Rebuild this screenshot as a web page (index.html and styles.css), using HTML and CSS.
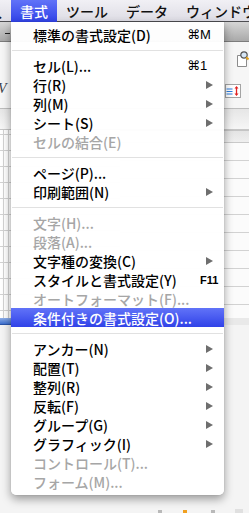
FILE: index.html
```html
<!DOCTYPE html>
<html lang="ja">
<head>
    <meta charset="UTF-8">
    <meta name="viewport" content="width=device-width, initial-scale=1.0">
    <title>書式メニュー</title>
    <link rel="stylesheet" href="styles.css">
</head>
<body>
    <!-- メニューバー -->
    <div class="menubar">
        <span class="mb-item mb-cut">入</span>
        <span class="mb-item mb-active">書式</span>
        <span class="mb-item">ツール</span>
        <span class="mb-item">データ</span>
        <span class="mb-item">ウィンドウ</span>
    </div>

    <!-- 背景のウィンドウ -->
    <div class="window">
        <div class="titlebar"><span class="tb-mark"></span></div>
        <div class="toolbar">
            <div class="tool-left"><span class="fmt-v">V</span></div>
            <div class="tool-right">
                <svg class="ico-find" width="13" height="16" viewBox="0 0 13 16">
                    <path d="M1.5 4.5h6l3 3v8h-9z" fill="#fff" stroke="#8c8c8c"/>
                    <circle cx="8" cy="4" r="3.2" fill="#d6e6f6" stroke="#555" stroke-width="1.2"/>
                    <path d="M10.3 6.3l2.2 2.2" stroke="#e3a21c" stroke-width="2"/>
                </svg>
                <svg class="ico-wrap" width="16" height="14" viewBox="0 0 16 14">
                    <rect x="0.5" y="0.5" width="15" height="13" fill="#fff" stroke="#a4a4a4"/>
                    <path d="M1.5 5h6M1.5 7.5h6M1.5 10h6" stroke="#2a7de0" stroke-width="1.2"/>
                    <path d="M11.5 3.5v7" stroke="#e02323" stroke-width="1.3"/>
                    <path d="M9.5 4.5l2-2.6 2 2.6zM9.5 9.5l2 2.6 2-2.6z" fill="#e02323"/>
                </svg>
            </div>
        </div>
        <div class="formula"></div>
        <div class="sheet">
            <div class="pane-left"></div>
            <div class="pane-right">
                <div class="colhead"></div>
                <div class="rows"></div>
            </div>
        </div>
        <div class="tabs"><span class="tab"></span></div>
        <div class="status">
            <span class="st st-gray"></span>
            <span class="st st-orange"></span>
            <span class="st st-gray"></span>
            <span class="st st-box"></span>
        </div>
    </div>

    <!-- 書式メニュー -->
    <div class="menu">
        <div class="item"><span class="label">標準の書式設定(D)</span><span class="mod">⌘</span><span class="ch">M</span></div>
        <div class="sep"></div>
        <div class="item"><span class="label">セル(L)...</span><span class="mod">⌘</span><span class="ch">1</span></div>
        <div class="item"><span class="label">行(R)</span><span class="arrow"></span></div>
        <div class="item"><span class="label">列(M)</span><span class="arrow"></span></div>
        <div class="item"><span class="label">シート(S)</span><span class="arrow"></span></div>
        <div class="item disabled"><span class="label">セルの結合(E)</span></div>
        <div class="sep"></div>
        <div class="item"><span class="label">ページ(P)...</span></div>
        <div class="item"><span class="label">印刷範囲(N)</span><span class="arrow"></span></div>
        <div class="sep"></div>
        <div class="item disabled"><span class="label">文字(H)...</span></div>
        <div class="item disabled"><span class="label">段落(A)...</span></div>
        <div class="item"><span class="label">文字種の変換(C)</span><span class="arrow"></span></div>
        <div class="item"><span class="label">スタイルと書式設定(Y)</span><span class="fkey">F11</span></div>
        <div class="item disabled"><span class="label">オートフォーマット(F)...</span></div>
        <div class="item selected"><span class="label">条件付きの書式設定(O)...</span></div>
        <div class="sep"></div>
        <div class="item"><span class="label">アンカー(N)</span><span class="arrow"></span></div>
        <div class="item"><span class="label">配置(T)</span><span class="arrow"></span></div>
        <div class="item"><span class="label">整列(R)</span><span class="arrow"></span></div>
        <div class="item"><span class="label">反転(F)</span><span class="arrow"></span></div>
        <div class="item"><span class="label">グループ(G)</span><span class="arrow"></span></div>
        <div class="item"><span class="label">グラフィック(I)</span><span class="arrow"></span></div>
        <div class="item disabled"><span class="label">コントロール(T)...</span></div>
        <div class="item disabled"><span class="label">フォーム(M)...</span></div>
    </div>
</body>
</html>
```

FILE: styles.css
```css
:root {
    --hilite-top: #6173f8;
    --hilite-bottom: #3042e8;
    --grid-line: #d2d2d2;
}
* {
    margin: 0;
    padding: 0;
    box-sizing: border-box;
}
body {
    position: relative;
    width: 249px;
    height: 513px;
    overflow: hidden;
    background: #fff;
    font-family: "Noto Sans CJK JP", "Liberation Sans", sans-serif;
    color: #000;
}

/* メニューバー */
.menubar {
    display: flex;
    height: 22px;
    background: linear-gradient(#f1f0f5, #dddce4);
    box-shadow: inset 0 -1px 0 #4e4e52;
    font-size: 14px;
    font-weight: 500;
    white-space: nowrap;
}
.mb-item {
    display: flex;
    align-items: center;
    height: 100%;
    padding: 0 9px 1px;
    color: #111;
}
.mb-cut {
    margin-left: -21px;
}
.mb-active {
    background: linear-gradient(var(--hilite-top), var(--hilite-bottom));
    color: #fff;
}

/* 背景ウィンドウ */
.window {
    display: flex;
    flex-direction: column;
    height: 491px;
}
.titlebar {
    height: 20px;
    padding: 11px 0 0 5px;
    background: linear-gradient(#d6d6d6, #a9a9a9);
    border-bottom: 1px solid #7c7c7c;
}
.tb-mark {
    display: block;
    width: 5px;
    height: 1px;
    background: #222;
}
.toolbar {
    display: flex;
    justify-content: space-between;
    height: 66px;
    background: #f6f6f6;
}
.tool-left {
    padding-top: 32px;
}
.fmt-v {
    font-family: "Liberation Serif", serif;
    font-style: italic;
    font-size: 14px;
    color: #3a3f4a;
    margin-left: -2px;
}
.tool-right {
    display: flex;
    flex-direction: column;
    width: 25px;
    padding-top: 9px;
}
.ico-find {
    margin-left: 12px;
}
.ico-wrap {
    margin-top: 17px;
    margin-left: 1px;
}
.formula {
    height: 22px;
    border-top: 1px solid #bdbdbd;
    border-bottom: 1px solid #c6c6c6;
    background: linear-gradient(#e6e6e6, #f6f6f6);
}
.sheet {
    display: flex;
    flex: 1;
}
.pane-left {
    width: 120px;
    background-color: #fff;
    background-image:
        linear-gradient(90deg, transparent 3px, var(--grid-line) 3px, var(--grid-line) 4px, transparent 4px, transparent 8px, var(--grid-line) 8px, var(--grid-line) 9px, transparent 9px),
        repeating-linear-gradient(transparent 0, transparent 15px, var(--grid-line) 15px, var(--grid-line) 16px);
    background-size: 100% 100%, 100% 16px;
    background-repeat: no-repeat, repeat-y;
    background-position: 0 0, 0 5px;
}
.pane-right {
    display: flex;
    flex-direction: column;
    flex: 1;
}
.colhead {
    height: 13px;
    background: linear-gradient(#e4e4e4, #efefef);
    border-top: 1px solid #c4c4c4;
    border-bottom: 1px solid #c9c9c9;
}
.rows {
    flex: 1;
    background: repeating-linear-gradient(#fbfbfb 0, #fbfbfb 17px, var(--grid-line) 17px, var(--grid-line) 18px);
}
.tabs {
    height: 7px;
    background: #e9e9e9;
}
.tab {
    display: block;
    width: 108px;
    height: 7px;
    border-radius: 0 0 4px 0;
    background: linear-gradient(#8fb0ea, #3d6fcf);
    border-bottom: 1px solid #2a55a8;
}
.status {
    display: flex;
    align-items: flex-end;
    flex: 1;
    background: #f4f4f4;
}
.st {
    display: block;
    height: 3px;
}
.st-gray {
    width: 4px;
    margin-left: 24px;
    background: #b9b9b9;
}
.st-gray:first-child {
    margin-left: 158px;
}
.st-orange {
    width: 4px;
    margin-left: 21px;
    background: #f0a020;
}
.st-box {
    width: 8px;
    height: 4px;
    margin-left: 20px;
    background: #e0e0e0;
}

/* プルダウンメニュー */
.menu {
    position: absolute;
    left: 11px;
    top: 22px;
    width: 213px;
    height: 473px;
    padding: 3px 0 4px;
    background: rgba(255, 255, 255, 0.97);
    border-radius: 0 0 5px 5px;
    box-shadow: 0 4px 10px rgba(0, 0, 0, 0.38), 0 0 1px rgba(0, 0, 0, 0.3);
    font-size: 14px;
    font-weight: 500;
    white-space: nowrap;
}
.item {
    display: flex;
    align-items: center;
    height: 19px;
    padding-left: 22px;
    color: #000;
}
.item.disabled {
    color: #a6a6a6;
}
.item.selected {
    background: linear-gradient(var(--hilite-top), var(--hilite-bottom));
    color: #fff;
}
.label {
    flex: 1;
}
.mod {
    width: 12px;
    margin-right: 1px;
    text-align: right;
    font-family: "DejaVu Sans", sans-serif;
    font-size: 13px;
    font-weight: normal;
}
.ch {
    width: 24px;
    font-family: "Liberation Sans", sans-serif;
    font-size: 13px;
}
.fkey {
    width: 24px;
    margin-left: 2px;
    font-family: "Liberation Sans", sans-serif;
    font-size: 11px;
    font-weight: bold;
}
.arrow {
    width: 0;
    height: 0;
    margin-right: 11px;
    border-left: 7px solid #6e6e6e;
    border-top: 4.5px solid transparent;
    border-bottom: 4.5px solid transparent;
}
.sep {
    display: flex;
    align-items: center;
    height: 12px;
    padding: 0 1px;
}
.sep::after {
    content: "";
    flex: 1;
    height: 1px;
    background: #e1e1e1;
}
```
